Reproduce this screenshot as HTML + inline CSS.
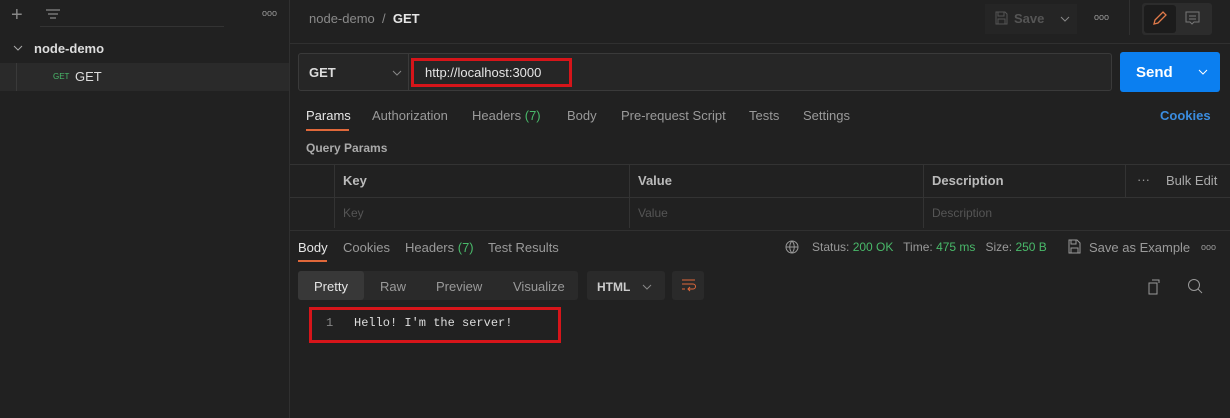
<!DOCTYPE html>
<html><head><style>
*{margin:0;padding:0;box-sizing:border-box}
body{width:1230px;height:418px;background:#212121;font-family:"Liberation Sans",sans-serif;font-size:13px;color:#ccc;position:relative;overflow:hidden}
.a{position:absolute;white-space:nowrap}
.g{color:#49b96a}
.m{color:#9a9a9a}
</style></head><body>
<!-- sidebar -->
<div class="a" style="left:289px;top:0;width:1px;height:418px;background:#303030"></div>
<div class="a" style="left:11px;top:4px;font-size:20px;color:#888">+</div>
<svg class="a" style="left:45px;top:9px" width="16" height="12"><path d="M1 1h14M3 5h10M5 9h6" stroke="#888" stroke-width="1.3"/></svg>
<div class="a" style="left:40px;top:26px;width:184px;height:1px;background:#333"></div>
<div class="a" style="left:262px;top:8px;font-size:9px;color:#999">ooo</div>
<svg class="a" style="left:13px;top:45px" width="10" height="7"><path d="M1 1l4 4 4-4" stroke="#aaa" fill="none"/></svg>
<div class="a" style="left:34px;top:41px;font-size:13px;font-weight:bold;color:#ddd">node-demo</div>
<div class="a" style="left:0;top:63px;width:289px;height:28px;background:#2a2a2a"></div>
<div class="a" style="left:16px;top:63px;width:1px;height:28px;background:#3a3a3a"></div>
<div class="a" style="left:53px;top:72px;font-size:8px" ><span class="g">GET</span></div>
<div class="a" style="left:75px;top:69px;font-size:13px;color:#ddd">GET</div>
<!-- header -->
<div class="a" style="left:309px;top:11px;font-size:13px;color:#8a8a8a">node-demo &nbsp;/ &nbsp;<b style="color:#e6e6e6">GET</b></div>
<div class="a" style="left:290px;top:43px;width:940px;height:1px;background:#303030"></div>
<div class="a" style="left:985px;top:4px;width:92px;height:30px;background:#252525"></div>
<svg class="a" style="left:995px;top:11px" width="13" height="14"><path d="M1 1h9l2 2v10H1z M3 1v4h6V1 M3 13V8h7v5" stroke="#555" fill="none"/></svg>
<div class="a" style="left:1014px;top:11px;font-weight:bold;color:#555">Save</div>
<svg class="a" style="left:1060px;top:16px" width="10" height="6"><path d="M1 1l4 4 4-4" stroke="#888" fill="none"/></svg>
<div class="a" style="left:1094px;top:12px;font-size:9px;color:#999">ooo</div>
<div class="a" style="left:1129px;top:0;width:1px;height:35px;background:#303030"></div>
<div class="a" style="left:1142px;top:3px;width:70px;height:32px;background:#2c2c2c;border-radius:3px"></div>
<div class="a" style="left:1144px;top:5px;width:32px;height:28px;background:#1c1c1c;border-radius:3px"></div>
<svg class="a" style="left:1152px;top:10px" width="16" height="16"><path d="M2 14l1-4 8-8 3 3-8 8z" stroke="#e07a4a" fill="none" stroke-width="1.3"/></svg>
<svg class="a" style="left:1185px;top:11px" width="16" height="16"><path d="M1 1h13v10H9l-2 2-2-2H1z M4 5h7M4 8h7" stroke="#777" fill="none"/></svg>
<!-- url bar -->
<div class="a" style="left:298px;top:53px;width:814px;height:38px;border:1px solid #3a3a3a;border-radius:3px;background:#262626"></div>
<div class="a" style="left:408px;top:53px;width:1px;height:38px;background:#3a3a3a"></div>
<div class="a" style="left:309px;top:65px;font-weight:bold;color:#ddd">GET</div>
<svg class="a" style="left:392px;top:70px" width="10" height="6"><path d="M1 1l4 4 4-4" stroke="#888" fill="none"/></svg>
<div class="a" style="left:411px;top:58px;width:161px;height:29px;border:3px solid #d6151a"></div>
<div class="a" style="left:425px;top:65px;color:#e6e6e6">http://localhost:3000</div>
<div class="a" style="left:1120px;top:52px;width:100px;height:40px;background:#0b7ff0;border-radius:3px"></div>
<div class="a" style="left:1136px;top:64px;font-size:15px;font-weight:bold;color:#fff">Send</div>
<svg class="a" style="left:1198px;top:69px" width="10" height="6"><path d="M1 1l4 4 4-4" stroke="#fff" fill="none"/></svg>
<!-- request tabs -->
<div class="a" style="left:306px;top:108px;color:#e6e6e6">Params</div>
<div class="a" style="left:306px;top:129px;width:43px;height:2px;background:#e0683a"></div>
<div class="a m" style="left:372px;top:108px">Authorization</div>
<div class="a m" style="left:472px;top:108px">Headers <span class="g">(7)</span></div>
<div class="a m" style="left:567px;top:108px">Body</div>
<div class="a m" style="left:621px;top:108px">Pre-request Script</div>
<div class="a m" style="left:749px;top:108px">Tests</div>
<div class="a m" style="left:803px;top:108px">Settings</div>
<div class="a" style="left:1160px;top:108px;font-weight:bold;color:#3b8de0">Cookies</div>
<div class="a" style="left:306px;top:141px;font-size:12px;font-weight:bold;color:#aaa">Query Params</div>
<!-- table -->
<div class="a" style="left:290px;top:164px;width:940px;height:1px;background:#333"></div>
<div class="a" style="left:290px;top:197px;width:940px;height:1px;background:#333"></div>
<div class="a" style="left:334px;top:164px;width:1px;height:64px;background:#333"></div>
<div class="a" style="left:629px;top:164px;width:1px;height:64px;background:#333"></div>
<div class="a" style="left:923px;top:164px;width:1px;height:64px;background:#333"></div>
<div class="a" style="left:1125px;top:164px;width:1px;height:33px;background:#333"></div>
<div class="a" style="left:343px;top:173px;font-weight:bold;color:#bbb">Key</div>
<div class="a" style="left:638px;top:173px;font-weight:bold;color:#bbb">Value</div>
<div class="a" style="left:932px;top:173px;font-weight:bold;color:#bbb">Description</div>
<div class="a" style="left:1137px;top:172px;color:#999">···</div>
<div class="a" style="left:1166px;top:173px;color:#aaa">Bulk Edit</div>
<div class="a" style="left:343px;top:206px;font-size:12px;color:#555">Key</div>
<div class="a" style="left:638px;top:206px;font-size:12px;color:#555">Value</div>
<div class="a" style="left:932px;top:206px;font-size:12px;color:#555">Description</div>
<div class="a" style="left:290px;top:230px;width:940px;height:1px;background:#303030"></div>
<!-- response -->
<div class="a" style="left:298px;top:240px;color:#e6e6e6">Body</div>
<div class="a" style="left:298px;top:260px;width:29px;height:2px;background:#e0683a"></div>
<div class="a m" style="left:343px;top:240px">Cookies</div>
<div class="a m" style="left:405px;top:240px">Headers <span class="g">(7)</span></div>
<div class="a m" style="left:488px;top:240px">Test Results</div>
<svg class="a" style="left:785px;top:240px" width="14" height="14"><circle cx="7" cy="7" r="6" stroke="#999" fill="none"/><path d="M1 7h12M7 1c-3 3-3 9 0 12M7 1c3 3 3 9 0 12" stroke="#999" fill="none"/></svg>
<div class="a m" style="left:812px;top:240px;font-size:12px">Status: <span class="g">200 OK</span> &nbsp; Time: <span class="g">475 ms</span> &nbsp; Size: <span class="g">250 B</span></div>
<svg class="a" style="left:1068px;top:239px" width="13" height="15"><path d="M1 1h8l3 3v10H1z M3 1v4h5V1 M3 14V9h7v5" stroke="#999" fill="none"/></svg>
<div class="a m" style="left:1089px;top:240px">Save as Example</div>
<div class="a" style="left:1201px;top:242px;font-size:9px;color:#999">ooo</div>
<div class="a" style="left:298px;top:271px;width:280px;height:29px;background:#2a2a2a;border-radius:3px"></div>
<div class="a" style="left:298px;top:271px;width:66px;height:29px;background:#383838;border-radius:3px"></div>
<div class="a" style="left:314px;top:279px;color:#e6e6e6">Pretty</div>
<div class="a m" style="left:380px;top:279px">Raw</div>
<div class="a m" style="left:436px;top:279px">Preview</div>
<div class="a m" style="left:513px;top:279px">Visualize</div>
<div class="a" style="left:587px;top:271px;width:78px;height:29px;background:#2a2a2a;border-radius:3px"></div>
<div class="a" style="left:597px;top:280px;font-size:12px;font-weight:bold;color:#ccc">HTML</div>
<svg class="a" style="left:642px;top:284px" width="10" height="6"><path d="M1 1l4 4 4-4" stroke="#888" fill="none"/></svg>
<div class="a" style="left:672px;top:271px;width:32px;height:29px;background:#2a2a2a;border-radius:3px"></div>
<svg class="a" style="left:681px;top:278px" width="15" height="14"><path d="M1 2h13M1 6h11a2 2 0 010 5H7M9 9l-2 2 2 2M1 11h3" stroke="#e0683a" fill="none"/></svg>
<svg class="a" style="left:1148px;top:279px" width="16" height="16"><path d="M4 1h7v3M1 4h8v11H1z" stroke="#999" fill="none"/></svg>
<svg class="a" style="left:1187px;top:278px" width="16" height="16"><circle cx="7" cy="7" r="5.5" stroke="#999" fill="none"/><path d="M11 11l4 4" stroke="#999"/></svg>
<div class="a" style="left:309px;top:307px;width:252px;height:36px;border:3px solid #d6151a"></div>
<div class="a" style="left:326px;top:316px;font-family:'Liberation Mono',monospace;font-size:12px;color:#888">1</div>
<div class="a" style="left:354px;top:316px;font-family:'Liberation Mono',monospace;font-size:12px;color:#ddd">Hello! I'm the server!</div>
</body></html>
